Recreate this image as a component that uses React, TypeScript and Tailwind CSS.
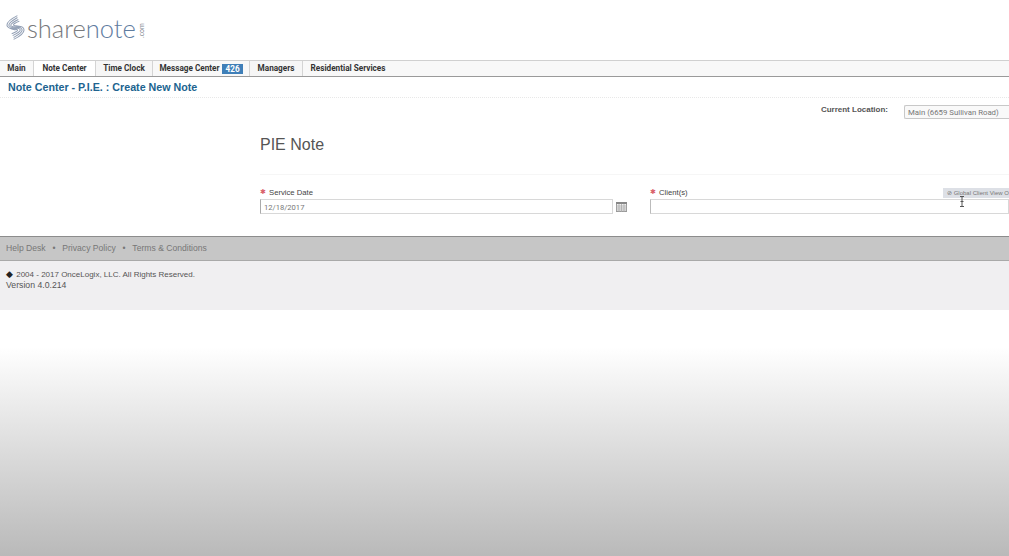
const tabs = [
  { label: 'Main', width: 'w-[34px]', bg: 'bg-[#f8f8f8]' },
  { label: 'Note Center', width: 'w-[62px]', bg: 'bg-white' },
  { label: 'Time Clock', width: 'w-[57px]', bg: 'bg-[#f6f6f6]' },
  { label: 'Message Center', width: 'w-[97px]', bg: 'bg-[#f8f8f8]' },
  { label: 'Managers', width: 'w-[53px]', bg: 'bg-[#f6f6f6]' },
  { label: 'Residential Services', width: 'w-[90px]', bg: 'bg-[#f8f8f8]' },
]

export default function App() {
  return (
    <div className="h-[556px] w-[1009px] overflow-hidden bg-white font-['Liberation_Sans',sans-serif]">
      <Header />
      <Nav />
      <div className="h-[21px] border-b border-dotted border-[#e8e8e8] pl-2 pt-[3px] text-[10.7px] leading-[14px] font-bold text-[#20638f]">
        Note Center - P.I.E. : Create New Note
      </div>
      <div className="flex h-[27px] items-start justify-end pt-[6px]">
        <span className="mr-4 text-[8px] leading-[11px] font-bold text-[#555]">Current Location:</span>
        <div className="-mr-[1px] mt-[1px] h-[14px] w-[106px] rounded-l-[2px] border border-r-0 border-[#c8c8c8] bg-[#f9f9f9] pl-[3px] font-['Roboto',sans-serif] text-[7.8px] leading-[13px] text-[#777]">
          Main (6659 Sullivan Road)
        </div>
      </div>
      <main className="h-[111px] pl-[260px]">
        <h1 className="pt-[10px] text-[16px] leading-[19px] text-[#555]">PIE Note</h1>
        <div className="mt-[20px] border-t border-[#f6f6f6]" />
        <div className="mt-[12px] flex">
          <div className="w-[390px]">
            <Label text="Service Date" />
            <div className="mt-[1px] flex items-center">
              <div className="h-[15px] w-[353px] border border-[#d8d8d8] border-l-[#aaa] pl-[3px] font-['Roboto',sans-serif] text-[7.6px] leading-[15px] text-[#777]">
                12/18/2017
              </div>
              <CalendarIcon />
            </div>
          </div>
          <div className="relative flex-1">
            <Label text="Client(s)" />
            <div className="mt-[1px] h-[15px] w-[359px] border border-[#d8d8d8] border-l-[#bbb]" />
            <div className="absolute left-[293px] top-[1px] h-[10px] w-[66px] overflow-hidden whitespace-nowrap bg-[#dde0e6] pl-[4px] text-[6px] leading-[10px] text-[#777]">
              ⊘ Global Client View Off
            </div>
            <CursorIcon />
          </div>
        </div>
      </main>
      <Footer />
      <div className="h-[247px] bg-gradient-to-b from-white from-[15%] to-[#b9b9b9]" />
    </div>
  )
}

function Header() {
  return (
    <header className="flex h-[60px] items-start pl-[6px] pt-[15px]">
      <svg width="19" height="26" viewBox="0 0 20 26" fill="none" stroke="#93a0b5" strokeWidth="1.1">
        <path d="M12 0 C6 3 1 6 1 10 C1 13 6 14 10 15" />
        <path d="M12 2 C7 5 3 7 3 10 C3 12 8 13 12 14" />
        <path d="M13 4 C9 6 5 8 5 10 C5 12 10 12 14 13" />
        <path d="M14 6 C11 7 7 9 8 10 C9 11 13 11 16 12" />
        <path d="M8 25 C14 22 19 19 19 15 C19 12 14 11 10 11" />
        <path d="M8 23 C13 20 17 18 17 15 C17 13 12 12 8 12" />
        <path d="M7 21 C11 19 15 17 15 15 C15 13 10 13 6 13" />
        <path d="M6 19 C9 18 13 16 12 15 C11 14 7 14 4 13" />
      </svg>
      <div className="flex items-start font-['Lato',sans-serif] text-[25.5px] leading-[26px] font-light">
        <span className="ml-[2px] text-[#77797c]">share</span>
        <span className="text-[#5f7c9f]">note</span>
        <span className="ml-[2px] mt-[8px] h-[15px] w-[7px] text-[7px] leading-[7px] font-normal text-[#7f868f] [writing-mode:vertical-rl] rotate-180">.com</span>
      </div>
    </header>
  )
}

function Nav() {
  return (
    <nav className="flex h-[17px] items-stretch border-y border-t-[#d0d0d0] border-b-[#9a9a9a] bg-[#f8f8f8] font-['Roboto',sans-serif] text-[8.2px] font-bold text-[#333]">
      {tabs.map((tab) => (
        <div
          key={tab.label}
          className={`flex items-center justify-center whitespace-nowrap border-r border-[#d4d4d4] last:border-r-0 ${tab.width} ${tab.bg}`}
        >
          {tab.label}
          {tab.label === 'Message Center' && (
            <span className="ml-[3px] h-[10px] bg-[#3f7fb8] px-[3px] leading-[10px] text-white">426</span>
          )}
        </div>
      ))}
    </nav>
  )
}

function Label({ text }: { text: string }) {
  return (
    <div className="flex h-[11px] items-center text-[7.7px] text-[#444]">
      <span className="mr-[3px] w-[6px] font-['DejaVu_Sans',sans-serif] text-[7px] leading-[11px] text-[#d9606a]">✱</span>
      {text}
    </div>
  )
}

function CalendarIcon() {
  return (
    <svg className="ml-[3px]" width="11" height="10" viewBox="0 0 11 10" fill="none">
      <rect x="0.5" y="0.5" width="10" height="9" fill="#f0f0f0" stroke="#999" />
      <rect x="0" y="0" width="11" height="2" fill="#888" />
      <path d="M0 4h11M0 6h11M0 8h11M3 2v8M5.5 2v8M8 2v8" stroke="#aaa" strokeWidth="0.8" />
    </svg>
  )
}

function CursorIcon() {
  return (
    <svg className="absolute left-[309px] top-[9px]" width="6" height="11" viewBox="0 0 6 11" fill="none" stroke="#555">
      <path d="M1 0.5h4M3 0.5v10M1 10.5h4M1.5 5.5h3" />
    </svg>
  )
}

function Footer() {
  return (
    <footer>
      <div className="flex h-[25px] items-center gap-[6.8px] border-y border-t-[#8c8c8c] border-b-[#a9a9a9] bg-[#c6c6c6] pl-[6px] text-[8.6px] text-[#777]">
        <span>Help Desk</span>
        <span>•</span>
        <span>Privacy Policy</span>
        <span>•</span>
        <span>Terms &amp; Conditions</span>
      </div>
      <div className="h-[49px] bg-[#f0eff1] pl-[6px] pt-[8px] text-[8px] leading-[10px] text-[#555]">
        <div>
          <span className="mr-[1px] text-[9px] text-[#222]">◆</span> 2004 - 2017 OnceLogix, LLC. All Rights Reserved.
        </div>
        <div className="text-[8.7px]">Version 4.0.214</div>
      </div>
    </footer>
  )
}
